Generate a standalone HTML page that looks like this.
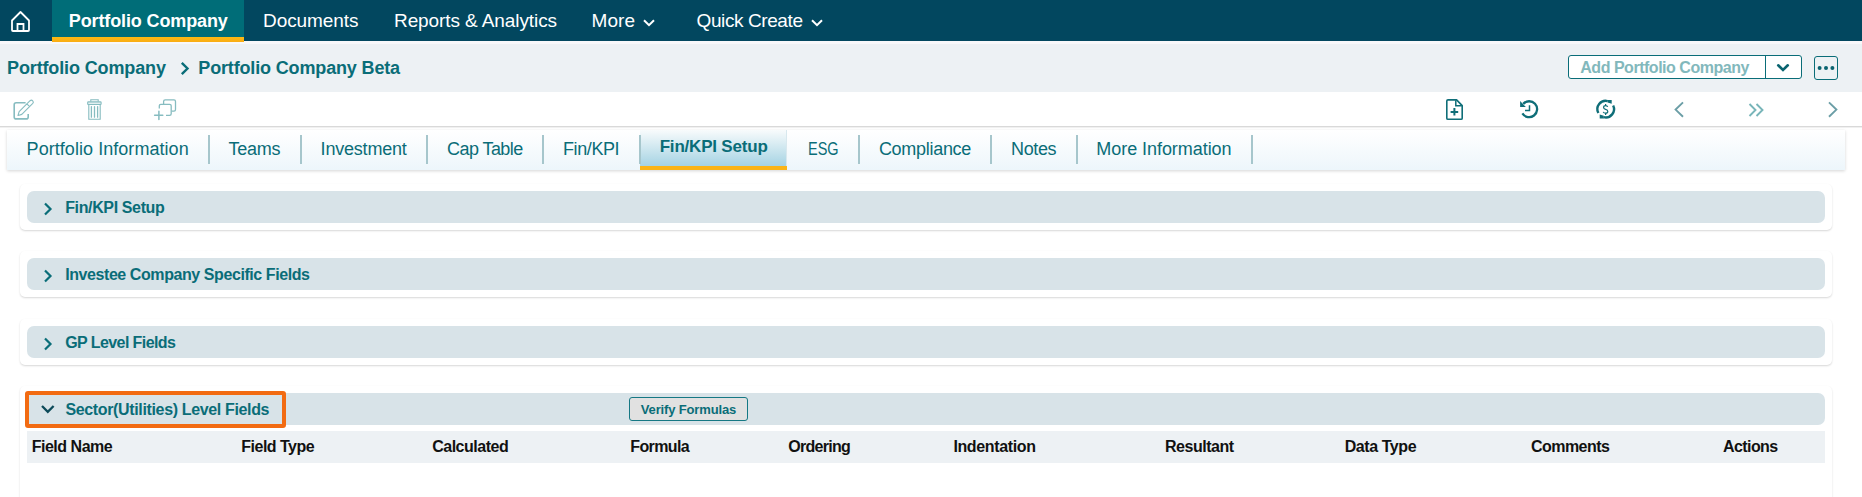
<!DOCTYPE html><html><head><meta charset="utf-8"><style>
html,body{margin:0;padding:0;}
body{width:1862px;height:497px;overflow:hidden;position:relative;background:#fff;font-family:"Liberation Sans",sans-serif;}
.t{position:absolute;white-space:nowrap;line-height:1;}
.b{position:absolute;}
svg{position:absolute;overflow:visible;}
</style></head><body>
<div class="b" style="left:0;top:0;width:1862px;height:41px;background:#02475f"></div>
<div class="b" style="left:52px;top:0;width:192px;height:41px;background:#006d78"></div>
<div class="b" style="left:52px;top:37px;width:192px;height:5px;background:linear-gradient(#fdb913,#f9ad14)"></div>
<svg style="left:0;top:0" width="60" height="41"><path d="M12 20.5 L20.5 12 L29 20.5 V30 Q29 31 28 31 H13 Q12 31 12 30 Z" fill="none" stroke="#fff" stroke-width="1.8" stroke-linejoin="round"/><path d="M17.5 31 V24 H23.5 V31" fill="none" stroke="#fff" stroke-width="1.8"/></svg>
<div class="t" style="left:68.80px;top:11.76px;font-size:18px;font-weight:700;letter-spacing:-0.125px;color:#fff;">Portfolio Company</div>
<div class="t" style="left:263.00px;top:10.92px;font-size:19px;font-weight:400;letter-spacing:-0.075px;color:#fff;">Documents</div>
<div class="t" style="left:394.00px;top:10.92px;font-size:19px;font-weight:400;letter-spacing:-0.094px;color:#fff;">Reports &amp; Analytics</div>
<div class="t" style="left:591.50px;top:10.92px;font-size:19px;font-weight:400;letter-spacing:0.067px;color:#fff;">More</div>
<div class="t" style="left:696.60px;top:10.92px;font-size:19px;font-weight:400;letter-spacing:-0.409px;color:#fff;">Quick Create</div>
<svg style="left:643px;top:18.5px" width="12" height="8"><path d="M1 1.2 L6 6.2 L11 1.2" fill="none" stroke="#fff" stroke-width="2"/></svg>
<svg style="left:810.5px;top:18.5px" width="12" height="8"><path d="M1 1.2 L6 6.2 L11 1.2" fill="none" stroke="#fff" stroke-width="2"/></svg>
<div class="b" style="left:0;top:41px;width:52px;height:3px;background:#f8f8fa"></div>
<div class="b" style="left:244px;top:41px;width:1618px;height:3px;background:#f8f8fa"></div>
<div class="b" style="left:52px;top:42px;width:192px;height:2px;background:#f8f8fa"></div>
<div class="b" style="left:0;top:44px;width:1862px;height:48px;background:#edf1f4"></div>
<div class="t" style="left:7.00px;top:58.76px;font-size:18px;font-weight:700;letter-spacing:-0.125px;color:#0a6d78;">Portfolio Company</div>
<svg style="left:179px;top:60px" width="12" height="16"><path d="M2.8 2.8 L8.5 8.5 L2.8 14.2" fill="none" stroke="#0a6d78" stroke-width="2.4"/></svg>
<div class="t" style="left:198.30px;top:58.76px;font-size:18px;font-weight:700;letter-spacing:-0.152px;color:#0a6d78;">Portfolio Company Beta</div>
<div class="b" style="left:1568px;top:55px;width:232px;height:22px;border:1px solid #0a6d78;border-radius:3px;background:#fff"></div>
<div class="b" style="left:1765px;top:56px;width:1px;height:22px;background:#0a6d78"></div>
<div class="t" style="left:1580.30px;top:59.76px;font-size:16px;font-weight:700;letter-spacing:-0.480px;color:#82b8bc;">Add Portfolio Company</div>
<svg style="left:1775px;top:62px" width="16" height="12"><path d="M3.2 3.3 L8 8 L12.8 3.3" fill="none" stroke="#0a6470" stroke-width="2.6" stroke-linecap="round"/></svg>
<div class="b" style="left:1814px;top:56px;width:22px;height:22px;border:1px solid #0a6d78;border-radius:3px;"></div>
<svg style="left:1814px;top:56px" width="24" height="24"><circle cx="5.6" cy="12" r="2" fill="#0a6470"/><circle cx="12" cy="12" r="2" fill="#0a6470"/><circle cx="18.4" cy="12" r="2" fill="#0a6470"/></svg>
<div class="b" style="left:0;top:126px;width:1862px;height:1px;background:#d9d9d9"></div>
<div class="b" style="left:0;top:127px;width:1862px;height:1px;background:#f0f0f0"></div>
<svg style="left:0;top:0" width="1862" height="497"><path d="M25.6 102.8 H16.2 Q14.2 102.8 14.2 104.8 V116.9 Q14.2 118.9 16.2 118.9 H26.2 Q28.2 118.9 28.2 116.9 V114" fill="none" stroke="#86bcc0" stroke-width="1.6"/><path d="M18 115.5 L19.13 111.69 L30.09 100.73 A1.9 1.9 0 0 1 32.78 103.41 L21.81 114.37 Z M26.9 103.9 L29.6 106.6" fill="none" stroke="#86bcc0" stroke-width="1.1" stroke-linejoin="round"/><path d="M90.8 101.6 V99.7 H98.2 V101.6" fill="none" stroke="#86bcc0" stroke-width="1.1"/><rect x="87.7" y="101.9" width="13.4" height="2.6" rx="0.6" fill="#e3eff0" stroke="#86bcc0" stroke-width="1.1"/><path d="M88.8 104.6 V119.3 H100.2 V104.6" fill="none" stroke="#86bcc0" stroke-width="1.1"/><path d="M91.4 106.6 V117.2 M94.5 106.6 V117.2 M97.6 106.6 V117.2" stroke="#86bcc0" stroke-width="1.3" stroke-linecap="round"/><path d="M163.6 103.9 V101.4 Q163.6 99.8 165.2 99.8 H174 Q175.5 99.8 175.5 101.4 V109.6 Q175.5 111.2 174 111.2 H171.6" fill="none" stroke="#86bcc0" stroke-width="1.3"/><path d="M159.3 108.6 V105.8 Q159.3 104.3 160.8 104.3 H169.6 Q171.2 104.3 171.2 105.8 V113.8 Q171.2 115.4 169.6 115.4 H166" fill="none" stroke="#86bcc0" stroke-width="1.3"/><path d="M154.6 115.3 H162.8 M158.9 111.2 V119.6" stroke="#86bcc0" stroke-width="1.5" stroke-linecap="round"/><path d="M1456.6 99.9 H1448 Q1446.8 99.9 1446.8 101.1 V118.2 Q1446.8 119.3 1448 119.3 H1461 Q1462.2 119.3 1462.2 118.2 V105.6 Z" fill="none" stroke="#0f6e78" stroke-width="1.6" stroke-linejoin="round"/><path d="M1455.8 100.2 V105.8 H1461.9" fill="none" stroke="#0f6e78" stroke-width="1.5"/><path d="M1450.6 111.9 H1458.2 M1454.4 108 V115.6" stroke="#0f6e78" stroke-width="2"/><path d="M1523.24 103.88 A7.95 7.95 0 1 1 1522.41 113.41" fill="none" stroke="#0f6e78" stroke-width="2.3"/><path d="M1520.1 100.9 L1520.1 106.9 L1525.8 106.9 Z" fill="#0f6e78"/><path d="M1529.5 105.2 V110.6 H1525" fill="none" stroke="#0f6e78" stroke-width="1.5"/><path d="M1598.37 113.05 A8.3 8.3 0 0 1 1607.71 101.10 M1613.16 105.51 A8.3 8.3 0 0 1 1603.69 117.20" fill="none" stroke="#0f6e78" stroke-width="2.4"/><path d="M1607.6 99.9 L1611.7 99.9 L1611.7 103.7 L1607.6 102.6 Z" fill="#0f6e78"/><path d="M1603.8 118.4 L1599.7 118.4 L1599.7 114.6 L1603.8 115.7 Z" fill="#0f6e78"/><path d="M1607.7 106.9 Q1607.3 105.7 1605.6 105.7 Q1603.6 105.7 1603.6 107.4 Q1603.6 108.8 1605.6 109.3 Q1607.8 109.8 1607.8 111.5 Q1607.8 113.2 1605.6 113.2 Q1603.7 113.2 1603.2 111.9 M1605.6 104 V105.7 M1605.6 113.2 V115" fill="none" stroke="#0f6e78" stroke-width="1.2"/></svg>
<svg style="left:1672px;top:100px" width="14" height="19"><path d="M11 2.4 L3.6 9.6 L11 16.8" fill="none" stroke="#6b9ea6" stroke-width="1.9"/></svg>
<svg style="left:1747px;top:101.6px" width="20" height="17"><path d="M2.5 2 L8.5 8 L2.5 14 M9.5 2 L15.5 8 L9.5 14" fill="none" stroke="#78b5b9" stroke-width="1.9"/></svg>
<svg style="left:1826px;top:100px" width="14" height="19"><path d="M3 2.4 L10.4 9.6 L3 16.8" fill="none" stroke="#6b9ea6" stroke-width="1.9"/></svg>
<div class="b" style="left:7px;top:130px;width:1838px;height:40px;background:linear-gradient(#ffffff,#edf6fb);box-shadow:0 1px 3px rgba(0,0,0,0.17)"></div>
<div class="b" style="left:640px;top:130px;width:147px;height:36px;background:linear-gradient(#f8fbfc,#a5d3e3);border-right:1px solid #d8e8ee;box-sizing:border-box"></div>
<div class="b" style="left:640px;top:166px;width:147px;height:4px;background:#fbb416"></div>
<div class="t" style="left:26.60px;top:139.76px;font-size:18px;font-weight:400;letter-spacing:0.050px;color:#0a6d78;">Portfolio Information</div>
<div class="t" style="left:228.60px;top:139.76px;font-size:18px;font-weight:400;letter-spacing:-0.275px;color:#0a6d78;">Teams</div>
<div class="t" style="left:320.60px;top:139.76px;font-size:18px;font-weight:400;letter-spacing:-0.200px;color:#0a6d78;">Investment</div>
<div class="t" style="left:447.00px;top:139.76px;font-size:18px;font-weight:400;letter-spacing:-0.562px;color:#0a6d78;">Cap Table</div>
<div class="t" style="left:563.00px;top:139.76px;font-size:18px;font-weight:400;letter-spacing:-0.400px;color:#0a6d78;">Fin/KPI</div>
<div class="t" style="left:659.70px;top:138.21px;font-size:17px;font-weight:700;letter-spacing:-0.200px;color:#0a6d78;">Fin/KPI Setup</div>
<div class="t" style="left:808.10px;top:139.76px;font-size:18px;font-weight:400;color:#0a6d78;transform:scaleX(0.8053);transform-origin:0 0;">ESG</div>
<div class="t" style="left:878.90px;top:139.76px;font-size:18px;font-weight:400;letter-spacing:-0.289px;color:#0a6d78;">Compliance</div>
<div class="t" style="left:1011.00px;top:139.76px;font-size:18px;font-weight:400;letter-spacing:-0.350px;color:#0a6d78;">Notes</div>
<div class="t" style="left:1096.30px;top:139.76px;font-size:18px;font-weight:400;letter-spacing:-0.053px;color:#0a6d78;">More Information</div>
<div class="b" style="left:208px;top:135px;width:1.5px;height:29px;background:#a6c6cc"></div>
<div class="b" style="left:300px;top:135px;width:1.5px;height:29px;background:#a6c6cc"></div>
<div class="b" style="left:426px;top:135px;width:1.5px;height:29px;background:#a6c6cc"></div>
<div class="b" style="left:542px;top:135px;width:1.5px;height:29px;background:#a6c6cc"></div>
<div class="b" style="left:639px;top:135px;width:1.5px;height:29px;background:#a6c6cc"></div>
<div class="b" style="left:858px;top:135px;width:1.5px;height:29px;background:#a6c6cc"></div>
<div class="b" style="left:990px;top:135px;width:1.5px;height:29px;background:#a6c6cc"></div>
<div class="b" style="left:1076px;top:135px;width:1.5px;height:29px;background:#a6c6cc"></div>
<div class="b" style="left:1251px;top:135px;width:1.5px;height:29px;background:#a6c6cc"></div>
<div class="b" style="left:20px;top:184px;width:1812px;height:46px;background:#fff;border-radius:5px;box-shadow:0 1px 2px rgba(0,0,0,0.16)"></div>
<div class="b" style="left:27px;top:191px;width:1798px;height:32px;background:#d8e3e8;border-radius:7px"></div>
<svg style="left:41.7px;top:200.6px" width="12" height="16"><path d="M3 2.5 L8.5 8 L3 13.5" fill="none" stroke="#0a6d78" stroke-width="2.2"/></svg>
<div class="t" style="left:65.20px;top:200.06px;font-size:16px;font-weight:700;letter-spacing:-0.367px;color:#0a6d78;">Fin/KPI Setup</div>
<div class="b" style="left:20px;top:251px;width:1812px;height:46px;background:#fff;border-radius:5px;box-shadow:0 1px 2px rgba(0,0,0,0.16)"></div>
<div class="b" style="left:27px;top:258px;width:1798px;height:32px;background:#d8e3e8;border-radius:7px"></div>
<svg style="left:41.7px;top:267.6px" width="12" height="16"><path d="M3 2.5 L8.5 8 L3 13.5" fill="none" stroke="#0a6d78" stroke-width="2.2"/></svg>
<div class="t" style="left:65.20px;top:267.06px;font-size:16px;font-weight:700;letter-spacing:-0.423px;color:#0a6d78;">Investee Company Specific Fields</div>
<div class="b" style="left:20px;top:319px;width:1812px;height:46px;background:#fff;border-radius:5px;box-shadow:0 1px 2px rgba(0,0,0,0.16)"></div>
<div class="b" style="left:27px;top:326px;width:1798px;height:32px;background:#d8e3e8;border-radius:7px"></div>
<svg style="left:41.7px;top:335.6px" width="12" height="16"><path d="M3 2.5 L8.5 8 L3 13.5" fill="none" stroke="#0a6d78" stroke-width="2.2"/></svg>
<div class="t" style="left:65.20px;top:335.06px;font-size:16px;font-weight:700;letter-spacing:-0.579px;color:#0a6d78;">GP Level Fields</div>
<div class="b" style="left:20px;top:386px;width:1812px;height:200px;background:#fff;border-radius:5px;box-shadow:0 1px 2px rgba(0,0,0,0.16)"></div>
<div class="b" style="left:27px;top:393px;width:1798px;height:32px;background:#d8e3e8;border-radius:7px"></div>
<div class="b" style="left:25px;top:391px;width:253px;height:28.5px;border:4px solid #f26b12;border-radius:3px;background:#d8e3e8"></div>
<svg style="left:40px;top:404px" width="16" height="12"><path d="M2 2 L7.8 7.8 L13.6 2" fill="none" stroke="#0c4a59" stroke-width="2.3"/></svg>
<div class="t" style="left:65.40px;top:402.46px;font-size:16px;font-weight:700;letter-spacing:-0.352px;color:#0a6d78;">Sector(Utilities) Level Fields</div>
<div class="b" style="left:629px;top:397px;width:117px;height:22px;border:1px solid #157884;border-radius:3px;background:#e1e1e1"></div>
<div class="t" style="left:640.80px;top:402.80px;font-size:13px;font-weight:700;letter-spacing:-0.150px;color:#0a6d78;">Verify Formulas</div>
<div class="b" style="left:27px;top:431px;width:1798px;height:32px;background:#edf1f4"></div>
<div class="t" style="left:31.70px;top:439.46px;font-size:16px;font-weight:700;letter-spacing:-0.478px;color:#111;">Field Name</div>
<div class="t" style="left:241.30px;top:439.46px;font-size:16px;font-weight:700;letter-spacing:-0.511px;color:#111;">Field Type</div>
<div class="t" style="left:432.20px;top:439.46px;font-size:16px;font-weight:700;letter-spacing:-0.489px;color:#111;">Calculated</div>
<div class="t" style="left:630.30px;top:439.46px;font-size:16px;font-weight:700;letter-spacing:-0.633px;color:#111;">Formula</div>
<div class="t" style="left:788.20px;top:439.46px;font-size:16px;font-weight:700;letter-spacing:-0.714px;color:#111;">Ordering</div>
<div class="t" style="left:953.40px;top:439.46px;font-size:16px;font-weight:700;letter-spacing:-0.370px;color:#111;">Indentation</div>
<div class="t" style="left:1165.00px;top:439.46px;font-size:16px;font-weight:700;letter-spacing:-0.488px;color:#111;">Resultant</div>
<div class="t" style="left:1344.70px;top:439.46px;font-size:16px;font-weight:700;letter-spacing:-0.425px;color:#111;">Data Type</div>
<div class="t" style="left:1531.00px;top:439.46px;font-size:16px;font-weight:700;letter-spacing:-0.543px;color:#111;">Comments</div>
<div class="t" style="left:1723.10px;top:439.46px;font-size:16px;font-weight:700;letter-spacing:-0.600px;color:#111;">Actions</div>
</body></html>
